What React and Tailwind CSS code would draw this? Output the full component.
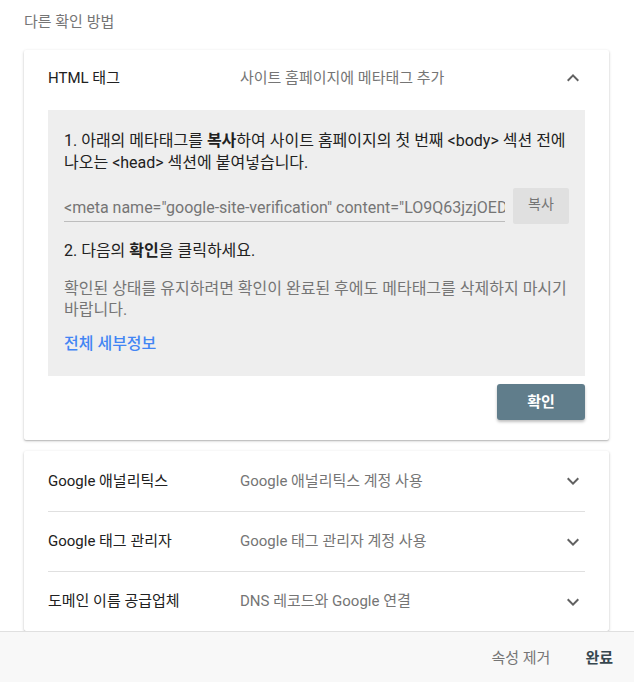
const font = { fontFamily: 'Roboto, "Noto Sans CJK KR", sans-serif' }

function Chevron({ up }) {
  return (
    <svg width="24" height="24" viewBox="0 0 24 24" className="shrink-0 text-[#616161]" fill="currentColor">
      {up
        ? <path d="M12 8l-6 6 1.41 1.41L12 10.83l4.59 4.58L18 14z" />
        : <path d="M16.59 8.59L12 13.17 7.41 8.59 6 10l6 6 6-6z" />}
    </svg>
  )
}

const card = 'bg-white rounded-[2px] shadow-[0_1px_3px_rgba(0,0,0,0.22),0_1px_1px_rgba(0,0,0,0.12)]'

export default function App() {
  const others = [
    ['Google 애널리틱스', 'Google 애널리틱스 계정 사용'],
    ['Google 태그 관리자', 'Google 태그 관리자 계정 사용'],
    ['도메인 이름 공급업체', 'DNS 레코드와 Google 연결'],
  ]

  return (
    <div className="h-[682px] w-[634px] flex flex-col bg-white overflow-hidden break-keep" style={font}>
      <div className="flex-1 min-h-0 overflow-hidden pt-3 pl-6 pr-[25px]">
        <p className="text-[15px] leading-[20px] text-[#757575]">다른 확인 방법</p>

        <div className={`${card} mt-[18px] px-6 pb-5`}>
          <div className="h-[56px] flex items-center text-[15px]">
            <span className="w-[192px] text-[#212121]">HTML 태그</span>
            <span className="flex-1 text-[#757575]">사이트 홈페이지에 메타태그 추가</span>
            <Chevron up />
          </div>

          <div className="mt-1 bg-[#eeeeee] px-4 pt-5 pb-[21px] text-[16px]">
            <p className="leading-[22px] text-[#212121]">
              1. 아래의 메타태그를 <b className="font-bold">복사</b>하여 사이트 홈페이지의 첫 번째 &lt;body&gt; 섹션 전에 나오는 &lt;head&gt; 섹션에 붙여넣습니다.
            </p>

            <div className="mt-[14px] flex items-end gap-2">
              <div className="flex-1 min-w-0 border-b border-[#bdbdbd] pb-[3px] mb-[2px]">
                <p className="whitespace-nowrap overflow-hidden leading-[20px] text-[#757575]">
                  &lt;meta name="google-site-verification" content="LO9Q63jzjOEDxQ2bn0kLk" /&gt;
                </p>
              </div>
              <button className="w-[56px] h-[36px] rounded-[2px] bg-[#e0e0e0] text-[14px] text-[#757575] shrink-0 pb-[3px]">
                복사
              </button>
            </div>

            <p className="mt-4 leading-[22px] text-[#212121]">
              2. 다음의 <b className="font-bold">확인</b>을 클릭하세요.
            </p>
            <p className="mt-4 leading-[21px] text-[#757575]">
              확인된 상태를 유지하려면 확인이 완료된 후에도 메타태그를 삭제하지 마시기 바랍니다.
            </p>
            <p className="mt-[13px] leading-[22px] text-[#4285f4] font-medium">전체 세부정보</p>
          </div>

          <div className="flex justify-end mt-2">
            <button className="w-[88px] h-[36px] rounded-[3px] bg-[#607d8b] text-white text-[15px] font-bold shadow-[0_2px_3px_rgba(0,0,0,0.25)]">
              확인
            </button>
          </div>
        </div>

        <div className={`${card} mt-[11px] px-6`}>
          {others.map(([label, desc], i) => (
            <div key={i} className={`h-[60px] flex items-center text-[15px] ${i ? 'border-t border-[#e0e0e0]' : ''}`}>
              <span className="w-[192px] text-[#212121]">{label}</span>
              <span className="flex-1 text-[#757575]">{desc}</span>
              <Chevron />
            </div>
          ))}
        </div>
      </div>

      <div className="h-[51px] shrink-0 bg-[#f8f8f8] border-t border-[#e0e0e0] flex items-center justify-end pr-[5px] pt-[3px] text-[15px]">
        <button className="px-4 h-[36px] text-[#757575]">속성 제거</button>
        <button className="px-4 h-[36px] ml-[3px] text-[#37474f] font-bold">완료</button>
      </div>
    </div>
  )
}
